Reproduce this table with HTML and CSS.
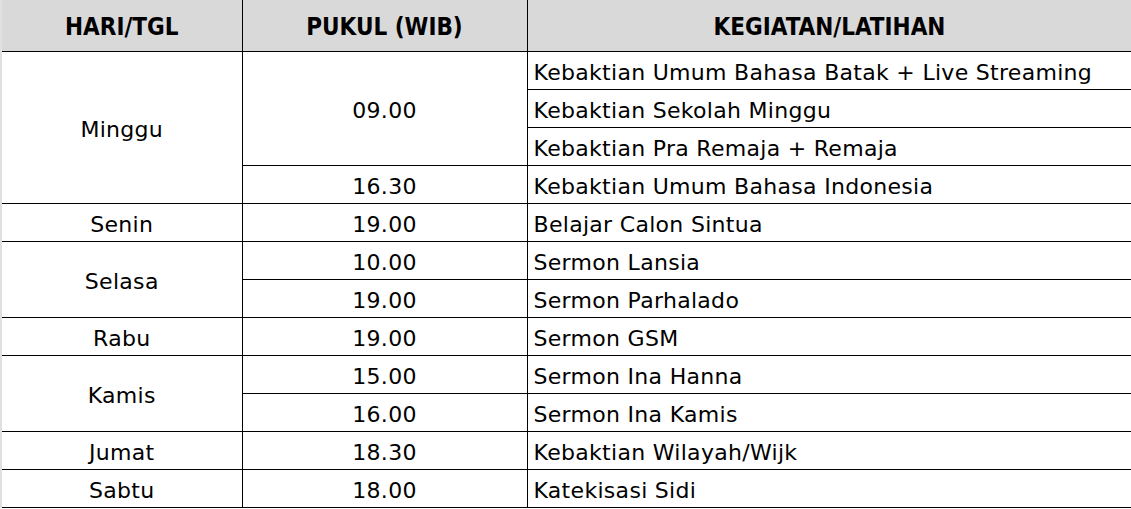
FILE: index.html
```html
<!DOCTYPE html>
<html>
<head>
<meta charset="utf-8">
<link rel="stylesheet" href="styles.css">
</head>
<body>
<table class="schedule">
  <colgroup>
    <col class="c-day">
    <col class="c-time">
    <col class="c-act">
  </colgroup>
  <thead>
    <tr><th>HARI/TGL</th><th>PUKUL (WIB)</th><th>KEGIATAN/LATIHAN</th></tr>
  </thead>
  <tbody>
    <tr><td class="day" rowspan="4">Minggu</td><td class="time" rowspan="3">09.00</td><td class="act">Kebaktian Umum Bahasa Batak + Live Streaming</td></tr>
    <tr><td class="act">Kebaktian Sekolah Minggu</td></tr>
    <tr><td class="act">Kebaktian Pra Remaja + Remaja</td></tr>
    <tr><td class="time">16.30</td><td class="act">Kebaktian Umum Bahasa Indonesia</td></tr>
    <tr><td class="day">Senin</td><td class="time">19.00</td><td class="act">Belajar Calon Sintua</td></tr>
    <tr><td class="day" rowspan="2">Selasa</td><td class="time">10.00</td><td class="act">Sermon Lansia</td></tr>
    <tr><td class="time">19.00</td><td class="act">Sermon Parhalado</td></tr>
    <tr><td class="day">Rabu</td><td class="time">19.00</td><td class="act">Sermon GSM</td></tr>
    <tr><td class="day" rowspan="2">Kamis</td><td class="time">15.00</td><td class="act">Sermon Ina Hanna</td></tr>
    <tr><td class="time">16.00</td><td class="act">Sermon Ina Kamis</td></tr>
    <tr><td class="day">Jumat</td><td class="time">18.30</td><td class="act">Kebaktian Wilayah/Wijk</td></tr>
    <tr><td class="day">Sabtu</td><td class="time">18.00</td><td class="act">Katekisasi Sidi</td></tr>
  </tbody>
</table>
</body>
</html>
```
FILE: styles.css
```css
html, body {
  margin: 0;
  padding: 0;
  background: #ffffff;
}
body {
  width: 1131px;
  height: 509px;
  overflow: hidden;
  font-family: "DejaVu Sans", "Liberation Sans", sans-serif;
  color: #000;
}
.schedule {
  border-collapse: collapse;
  table-layout: fixed;
  width: 1131px;
  border-left: 2px solid #e0e0e0;
}
.c-day { width: 241px; }
.c-time { width: 285px; }
.c-act { width: 605px; }
.schedule th {
  background: #d9d9d9;
  height: 48px;
  padding: 3px 0 0 0;
  font-weight: bold;
  font-size: 24px;
  font-stretch: condensed;
  border-right: 1px solid #000;
  border-bottom: 1px solid #000;
  text-align: center;
  vertical-align: middle;
  line-height: 1;
}
.schedule th:last-child { border-right: 1px solid #d9d9d9; }
.schedule td {
  height: 33px;
  padding: 4px 0 0 0;
  font-size: 22px;
  letter-spacing: 0.3px;
  border: 1px solid #000;
  vertical-align: middle;
  line-height: 1;
}
.schedule td.day, .schedule td.time { text-align: center; }
.schedule td.day { border-left: none; }
.schedule td.act {
  text-align: left;
  padding-left: 6px;
}
```
